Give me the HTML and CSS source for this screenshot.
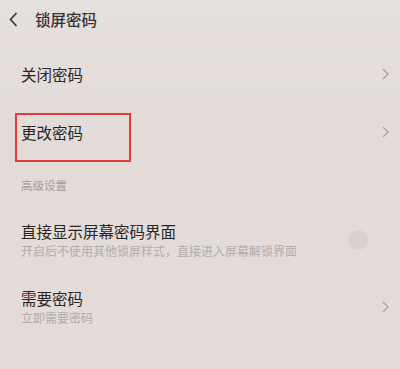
FILE: index.html
```html
<!DOCTYPE html>
<html lang="zh-CN">
<head>
    <meta charset="UTF-8">
    <meta name="viewport" content="width=device-width, initial-scale=1.0">
    <title>锁屏密码</title>
    <link rel="stylesheet" href="styles.css">
</head>
<body>
    <div class="header">
        <svg class="back" width="9" height="15" viewBox="0 0 9 15">
            <path d="M7.5 1 L1.5 7.5 L7.5 14" fill="none" stroke="#3a3635" stroke-width="1.6"/>
        </svg>
        <span class="title">锁屏密码</span>
    </div>

    <div class="row">
        <span class="name">关闭密码</span>
        <svg class="arrow" width="7" height="12" viewBox="0 0 7 12">
            <path d="M1 1 L6 6 L1 11" fill="none" stroke="#aaa3a1" stroke-width="1.3"/>
        </svg>
    </div>
    <div class="row">
        <span class="name">更改密码</span>
        <svg class="arrow" width="7" height="12" viewBox="0 0 7 12">
            <path d="M1 1 L6 6 L1 11" fill="none" stroke="#aaa3a1" stroke-width="1.3"/>
        </svg>
        <div class="mark"></div>
    </div>

    <div class="section">高级设置</div>

    <div class="row tall">
        <div class="text">
            <span class="name">直接显示屏幕密码界面</span>
            <span class="sub">开启后不使用其他锁屏样式，直接进入屏幕解锁界面</span>
        </div>
        <div class="knob"></div>
    </div>
    <div class="row tall">
        <div class="text">
            <span class="name">需要密码</span>
            <span class="sub">立即需要密码</span>
        </div>
        <svg class="arrow" width="7" height="12" viewBox="0 0 7 12">
            <path d="M1 1 L6 6 L1 11" fill="none" stroke="#aaa3a1" stroke-width="1.3"/>
        </svg>
    </div>
</body>
</html>
```

FILE: styles.css
```css
body {
    margin: 0;
    width: 400px;
    height: 369px;
    overflow: hidden;
    background: linear-gradient(#e6e0dd, #e2dbd8 40%, #e3dcd9);
    font-family: "Noto Sans CJK SC", "Noto Sans", sans-serif;
    color: #2a2625;
}
.header {
    height: 38px;
    display: flex;
    align-items: center;
    padding-left: 9px;
    margin-bottom: 7px;
}
.title {
    margin-left: 17px;
    font-size: 15.5px;
    font-weight: 500;
    color: #363231;
}
.row {
    position: relative;
    height: 58px;
    display: flex;
    align-items: center;
    justify-content: space-between;
    padding: 0 11px 0 21px;
}
.row.tall {
    height: 67px;
}
.name {
    font-size: 15.5px;
    line-height: 20px;
}
.text {
    display: flex;
    flex-direction: column;
    gap: 1px;
}
.sub {
    font-size: 12px;
    line-height: 17px;
    color: #b2acaa;
}
.section {
    height: 45px;
    box-sizing: border-box;
    padding: 16px 0 0 21px;
    font-size: 11.5px;
    color: #a29c9a;
}
.mark {
    position: absolute;
    left: 15px;
    top: 10px;
    width: 112px;
    height: 45px;
    border: 2px solid #e53a3c;
}
.knob {
    width: 20px;
    height: 20px;
    border-radius: 50%;
    background: #d7d1cf;
    margin-right: 21px;
}
```
